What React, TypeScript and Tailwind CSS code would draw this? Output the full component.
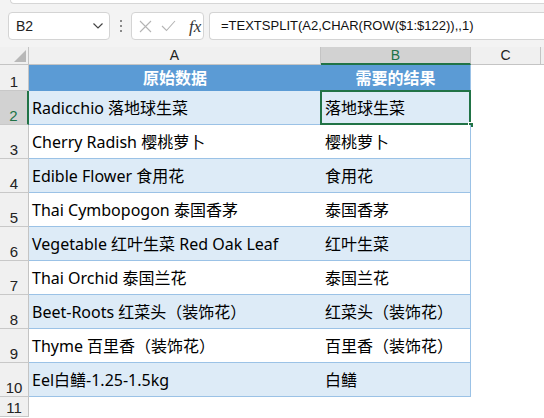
const rows: [string, string][] = [
  ['Radicchio 落地球生菜', '落地球生菜'],
  ['Cherry Radish 樱桃萝卜', '樱桃萝卜'],
  ['Edible Flower 食用花', '食用花'],
  ['Thai Cymbopogon 泰国香茅', '泰国香茅'],
  ['Vegetable 红叶生菜 Red Oak Leaf', '红叶生菜'],
  ['Thai Orchid 泰国兰花', '泰国兰花'],
  ['Beet-Roots 红菜头（装饰花）', '红菜头（装饰花）'],
  ['Thyme 百里香（装饰花）', '百里香（装饰花）'],
  ['Eel白鳝-1.25-1.5kg', '白鳝'],
]

const cellFont = "[font-family:'Noto_Sans','Noto_Sans_CJK_SC',sans-serif]"

function Toolbar() {
  return (
    <div className="bg-[#f3f3f3] h-[47px] flex flex-col">
      <div className="h-[4px] ml-[10px] bg-white border-l border-b border-[#d6d6d6] rounded-bl-[4px]" />
      <div className="flex items-center mt-[8px] h-[28px]">
        <div className="ml-[8px] w-[102px] h-[28px] bg-white border border-[#d4d4d4] rounded-[4px] flex items-center justify-between pl-[7px] pr-[5px]">
          <span className="text-[14px] text-[#222] [font-family:'Liberation_Sans',sans-serif]">B2</span>
          <svg width="12" height="8" viewBox="0 0 12 8">
            <path d="M1.5 1.5 L6 6 L10.5 1.5" fill="none" stroke="#444" strokeWidth="1.2" />
          </svg>
        </div>
        <div className="w-[21px] flex flex-col items-center gap-[3px]">
          <div className="w-[2px] h-[2px] bg-[#8a8a8a]" />
          <div className="w-[2px] h-[2px] bg-[#8a8a8a]" />
          <div className="w-[2px] h-[2px] bg-[#8a8a8a]" />
        </div>
        <div className="w-[73px] h-[28px] bg-white border border-[#d4d4d4] rounded-[4px] flex items-center pl-[7px] gap-[9px]">
          <svg width="13" height="13" viewBox="0 0 13 13">
            <path d="M1 1 L12 12 M12 1 L1 12" stroke="#b4b4b4" strokeWidth="1.1" fill="none" />
          </svg>
          <svg width="15" height="12" viewBox="0 0 15 12">
            <path d="M1 6 L5.5 10.5 L14 1" stroke="#b4b4b4" strokeWidth="1.1" fill="none" />
          </svg>
          <span className="ml-[4px] italic text-[17px] text-[#333] [font-family:'Liberation_Serif',serif] leading-none">fx</span>
        </div>
        <div className="ml-[5px] flex-1 h-[28px] bg-white border border-[#d4d4d4] border-r-0 rounded-l-[4px] flex items-center pl-[11px]">
          <span className="text-[13px] text-[#111] [font-family:'Liberation_Sans',sans-serif] whitespace-nowrap">
            =TEXTSPLIT(A2,CHAR(ROW($1:$122)),,1)
          </span>
        </div>
      </div>
    </div>
  )
}

function ColHeader() {
  return (
    <div className="flex h-[18px] bg-[#f0f0f0] text-[14px] [font-family:'Liberation_Sans',sans-serif]">
      <div className="w-[29px] border-r border-b border-[#c4c4c4] relative flex items-end justify-end pr-[2px] pb-[2px]">
        <svg width="12" height="12" viewBox="0 0 12 12">
          <path d="M12 0 L12 12 L0 12 Z" fill="#b8b8b8" />
        </svg>
      </div>
      <div className="w-[292px] border-r border-b border-[#c4c4c4] flex items-center justify-center text-[#222]">A</div>
      <div className="w-[150px] bg-[#d2d2d2] border-r border-[#c4c4c4] border-b-2 border-b-[#217346] flex items-center justify-center text-[#217346]">B</div>
      <div className="w-[70px] border-r border-b border-[#c4c4c4] flex items-center justify-center text-[#222]">C</div>
      <div className="flex-1 border-b border-[#c4c4c4]" />
    </div>
  )
}

function RowNum({ n, h, active }: { n: number; h: string; active?: boolean }) {
  return (
    <div
      className={`w-[29px] shrink-0 ${h} border-b border-[#c8c8c8] flex items-end justify-center pb-[1px] text-[15px] leading-none [font-family:'Liberation_Sans',sans-serif] ${
        active ? 'bg-[#d2d2d2] text-[#217346] border-r-2 border-r-[#217346]' : 'bg-[#f0f0f0] text-[#222] border-r border-r-[#c4c4c4]'
      }`}
    >
      {n}
    </div>
  )
}

export default function App() {
  return (
    <div className="w-[544px] h-[418px] overflow-hidden bg-white">
      <Toolbar />
      <ColHeader />
      <div className="flex h-[26px]">
        <RowNum n={1} h="h-[26px]" />
        <div className={`w-[292px] bg-[#5b9bd5] flex items-center justify-center text-white font-bold text-[16px] ${cellFont}`}>原始数据</div>
        <div className={`w-[150px] bg-[#5b9bd5] border-r border-[#9bc2e6] flex items-center justify-center text-white font-bold text-[16px] ${cellFont}`}>需要的结果</div>
      </div>
      {rows.map(([a, b], i) => {
        const band = i % 2 === 0 ? 'bg-[#ddebf7]' : 'bg-white'
        return (
          <div key={i} className="flex h-[34px]">
            <RowNum n={i + 2} h="h-[34px]" active={i === 0} />
            <div className={`w-[292px] ${band} border-b border-[#9bc2e6] flex items-center pl-[3px] text-[16px] text-black ${cellFont} whitespace-nowrap`}>{a}</div>
            <div className={`w-[150px] ${band} border-b border-r border-[#9bc2e6] flex items-center pl-[4px] text-[16px] text-black ${cellFont} whitespace-nowrap relative`}>
              {b}
              {i === 0 && (
                <>
                  <div className="absolute -left-[1px] -top-[1px] right-[-1px] bottom-[-1px] border-2 border-[#217346]" />
                  <div className="absolute right-[-4px] bottom-[-4px] w-[6px] h-[6px] bg-[#217346] border border-white" />
                </>
              )}
            </div>
          </div>
        )
      })}
      <div className="flex h-[20px]">
        <RowNum n={11} h="h-[20px]" />
      </div>
    </div>
  )
}
